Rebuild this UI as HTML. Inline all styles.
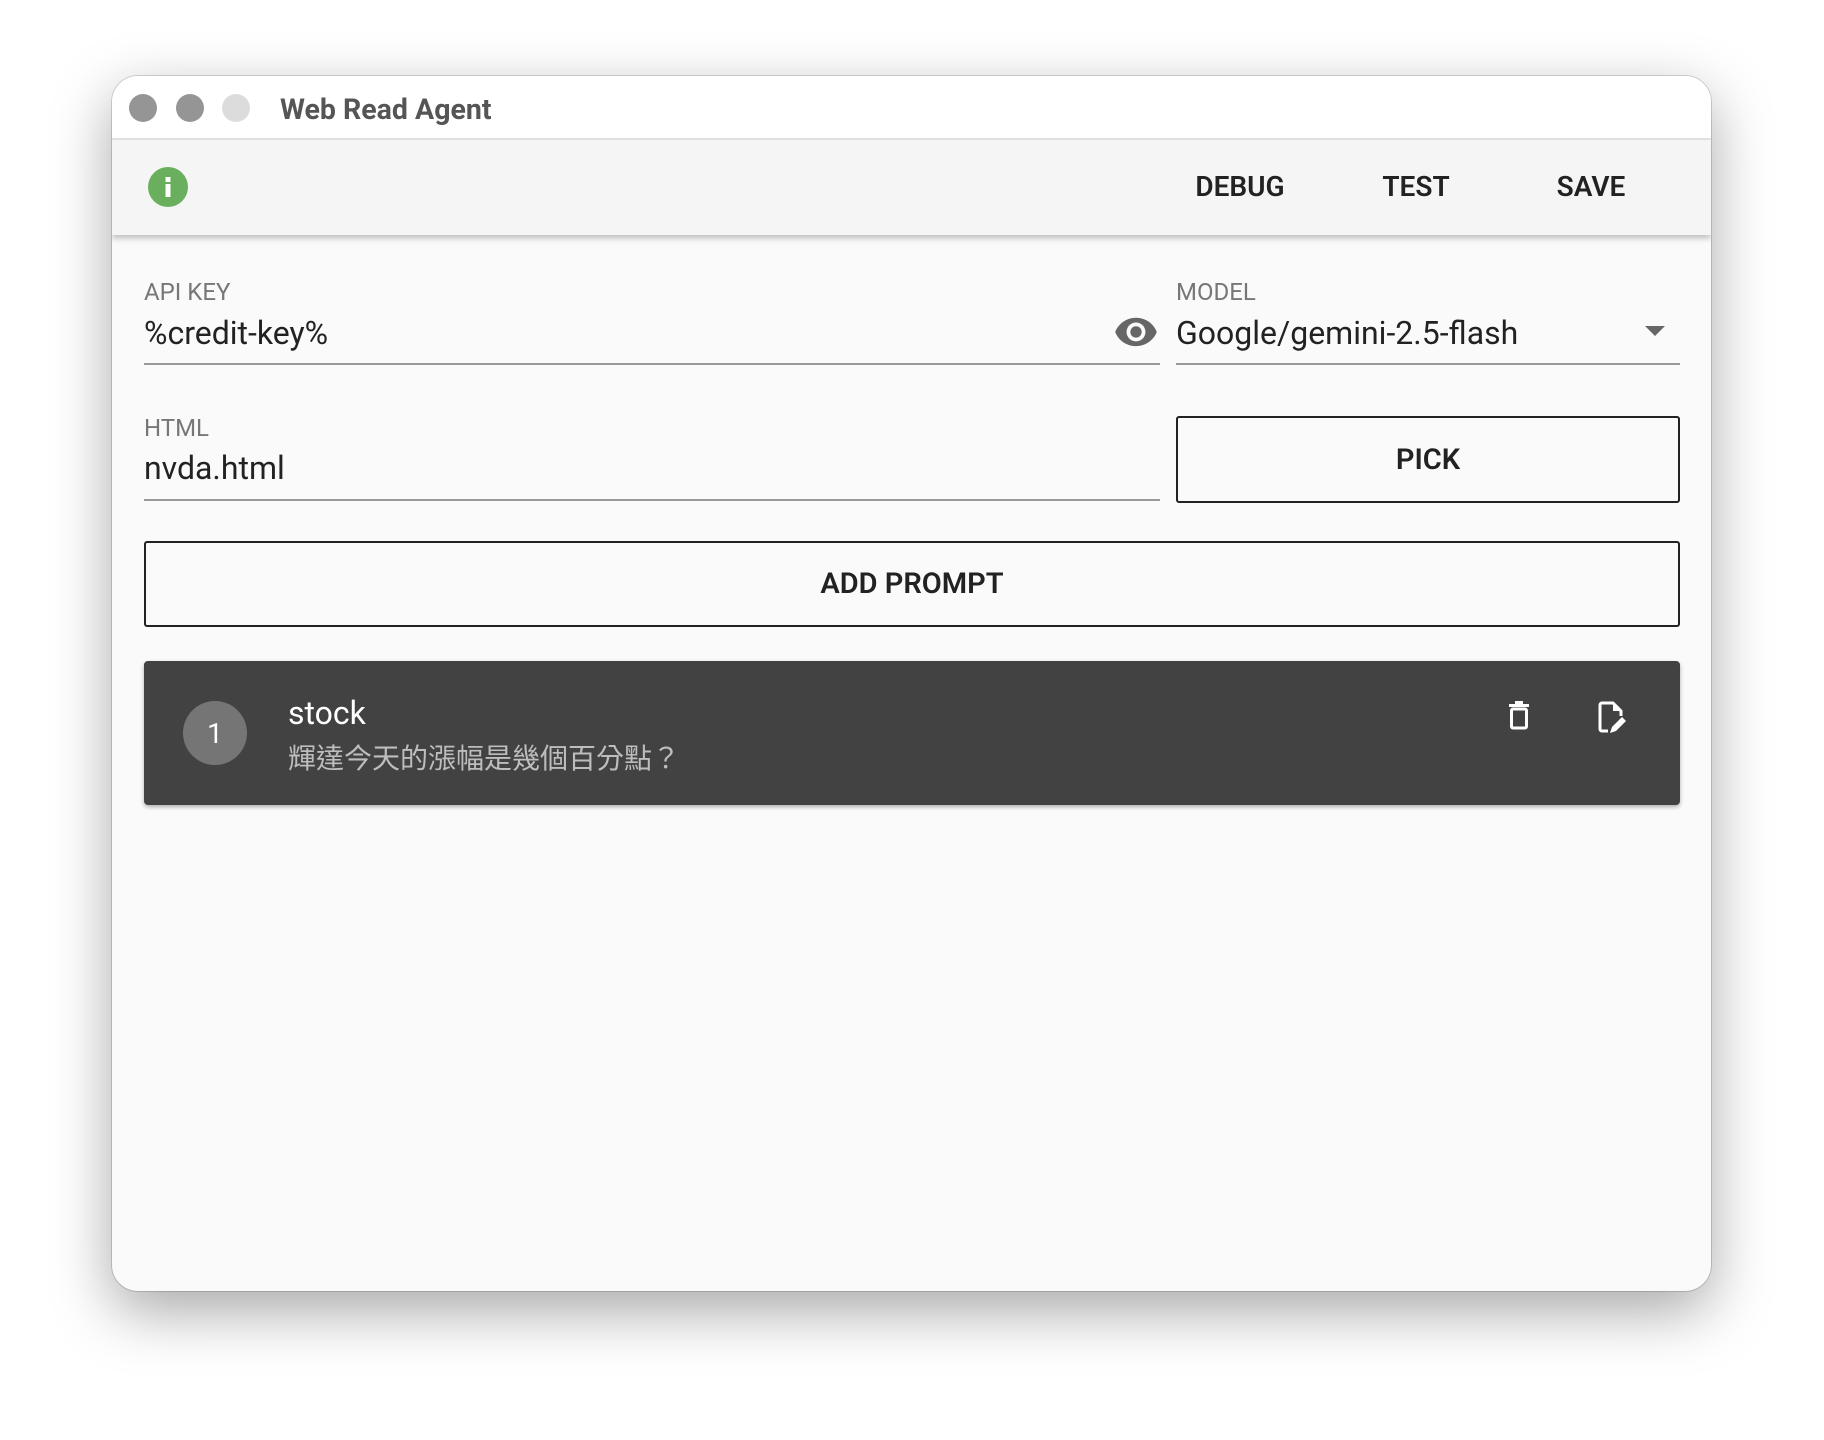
<!DOCTYPE html>
<html><head><meta charset="utf-8"><style>
*{box-sizing:border-box;margin:0;padding:0}
body{width:1824px;height:1440px;background:#fff;position:relative;overflow:hidden;font-family:"Roboto","Liberation Sans","Noto Sans CJK TC",sans-serif}
.win{position:absolute;left:112px;top:76px;width:1599px;height:1215px;border-radius:26px;background:#fafafa;overflow:hidden;box-shadow:0 20px 60px rgba(0,0,0,.35),0 0 0 1px rgba(0,0,0,.15)}
.title{position:absolute;left:0;top:0;width:100%;height:64px;background:#fff;border-bottom:2px solid #e6e6e6}
.dot{position:absolute;top:18px;width:28px;height:28px;border-radius:50%}
.ttl{position:absolute;left:168px;top:17px;font-size:28.5px;font-weight:bold;color:#555}
.bar{position:absolute;left:0;top:64px;width:100%;height:95px;background:#f5f5f5;box-shadow:0 3px 6px rgba(0,0,0,.25)}
.btn{position:absolute;top:96px;transform:translateX(-50%);font-size:28px;font-weight:600;color:#222;line-height:30px}
.abs{position:absolute}
.lbl{font-size:24px;color:#777}
.val{font-size:32px;color:#222}
.line{height:2px;background:#999}
.ob{border:2px solid #222;border-radius:3px;display:flex;align-items:center;justify-content:center;font-size:29px;font-weight:600;color:#222}
</style></head><body>
<div class="win">
 <div class="title">
  <div class="dot" style="left:17px;background:#959595"></div>
  <div class="dot" style="left:64px;background:#959595"></div>
  <div class="dot" style="left:110px;background:#dcdcdc"></div>
  <div class="ttl">Web Read Agent</div>
 </div>
 <div class="bar"></div>
 <svg class="abs" style="left:36px;top:91px" width="40" height="40" viewBox="0 0 40 40"><circle cx="20" cy="20" r="20" fill="#6aaf5e"/><rect x="17.5" y="17" width="5" height="13" fill="#fff"/><rect x="17.5" y="10" width="5" height="5" fill="#fff"/></svg>
 <div class="btn" style="left:1128px">DEBUG</div>
 <div class="btn" style="left:1304px">TEST</div>
 <div class="btn" style="left:1479px">SAVE</div>

 <div class="abs lbl" style="left:32px;top:202px">API KEY</div>
 <div class="abs val" style="left:32px;top:238px">%credit-key%</div>
 <svg class="abs" style="left:1001px;top:238px" width="46" height="34" viewBox="0 0 24 18"><path d="M12 2C7 2 2.7 5.1 1 9.5 2.7 13.9 7 17 12 17s9.3-3.1 11-7.5C21.3 5.1 17 2 12 2zm0 12.5a5 5 0 110-10 5 5 0 010 10zm0-8a3 3 0 100 6 3 3 0 000-6z" fill="#666"/></svg>
 <div class="abs line" style="left:32px;top:287px;width:1016px"></div>

 <div class="abs lbl" style="left:1064px;top:202px">MODEL</div>
 <div class="abs val" style="left:1064px;top:238px">Google/gemini-2.5-flash</div>
 <svg class="abs" style="left:1533px;top:250px" width="20" height="12"><path d="M0 0h20L10 10z" fill="#666"/></svg>
 <div class="abs line" style="left:1064px;top:287px;width:504px"></div>

 <div class="abs lbl" style="left:32px;top:338px">HTML</div>
 <div class="abs val" style="left:32px;top:373px">nvda.html</div>
 <div class="abs line" style="left:32px;top:423px;width:1016px"></div>

 <div class="abs ob" style="left:1064px;top:340px;width:504px;height:87px">PICK</div>
 <div class="abs ob" style="left:32px;top:465px;width:1536px;height:86px">ADD PROMPT</div>

 <div class="abs" style="left:32px;top:585px;width:1536px;height:144px;background:#424242;border-radius:4px;box-shadow:0 2px 4px rgba(0,0,0,.3)">
  <div class="abs" style="left:39px;top:40px;width:64px;height:64px;border-radius:50%;background:#757575;color:#fff;font-size:28px;display:flex;align-items:center;justify-content:center">1</div>
  <div class="abs" style="left:144px;top:33px;font-size:32px;color:#fff">stock</div>
  <div class="abs" style="left:144px;top:76px;font-size:28px;color:#bdbdbd">輝達今天的漲幅是幾個百分點？</div>
  <svg class="abs" style="left:1363px;top:40px" width="24" height="30" viewBox="0 0 24 30"><rect x="2" y="3" width="20" height="3" fill="#fff"/><rect x="8" y="0" width="8" height="3" fill="#fff"/><rect x="4.5" y="8" width="15" height="19" rx="1.5" fill="none" stroke="#fff" stroke-width="3"/></svg>
  <svg class="abs" style="left:1453px;top:40px" width="30" height="34" viewBox="0 0 30 34"><path d="M11 30H5a2 2 0 01-2-2V4a2 2 0 012-2h11l8 8v5" fill="none" stroke="#fff" stroke-width="3"/><path d="M16 2v8h8" fill="#fff"/><path d="M13 32l2-6 10-10 4 4-10 10z" fill="#fff"/></svg>
 </div>
</div>
</body></html>
